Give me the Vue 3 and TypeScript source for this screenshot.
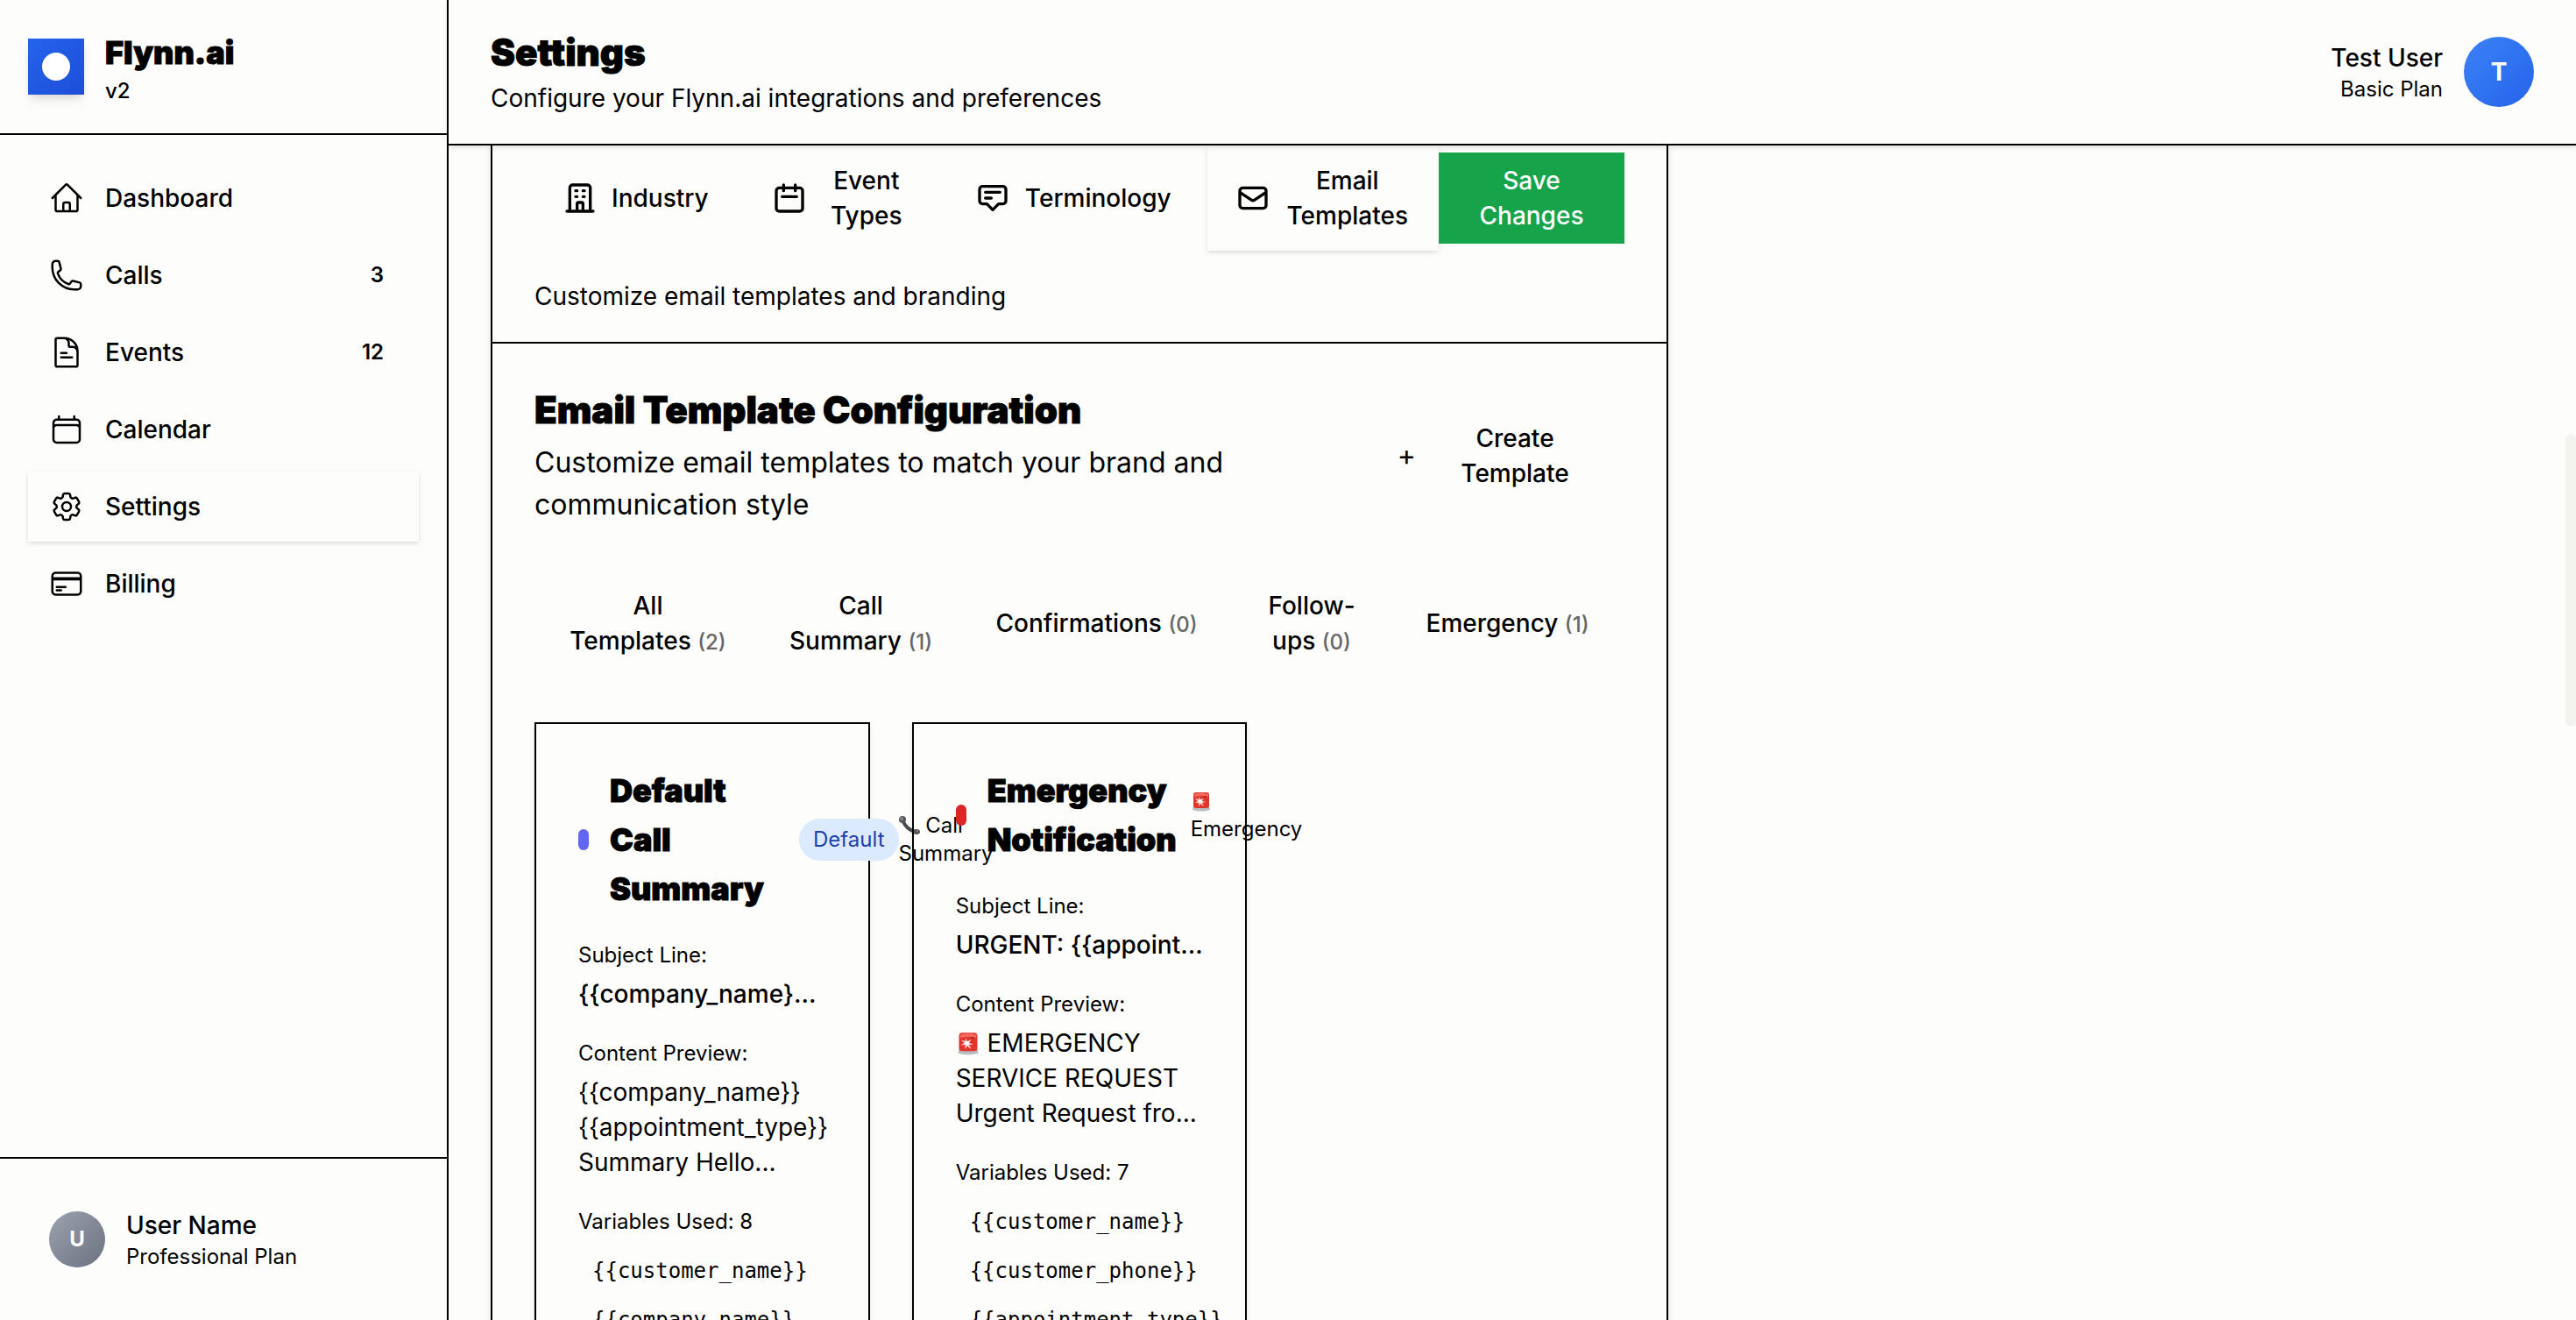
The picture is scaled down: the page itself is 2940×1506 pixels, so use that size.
<script setup lang="ts">
interface NavItem { label: string; paths: string[]; badge?: string; active?: boolean }
interface Tab { label: string; path: string; active?: boolean }
interface Filter { label: string; count: number }
interface Template {
  title: string
  color: string
  isDefault: boolean
  icon: 'phone' | 'siren'
  type: string
  subject: string
  preview: string[]
  alert: boolean
  total: number
  variables: string[]
}

const navItems: NavItem[] = [
  { label: 'Dashboard', paths: ['m2.25 12 8.954-8.955c.44-.439 1.152-.439 1.591 0L21.75 12M4.5 9.75v10.125c0 .621.504 1.125 1.125 1.125H9.75v-4.875c0-.621.504-1.125 1.125-1.125h2.25c.621 0 1.125.504 1.125 1.125V21h4.125c.621 0 1.125-.504 1.125-1.125V9.75M8.25 21h8.25'] },
  { label: 'Calls', badge: '3', paths: ['M2.25 6.75c0 8.284 6.716 15 15 15h2.25a2.25 2.25 0 0 0 2.25-2.25v-1.372c0-.516-.351-.966-.852-1.091l-4.423-1.106c-.44-.11-.902.055-1.173.417l-.97 1.293c-.282.376-.769.542-1.21.38a12.035 12.035 0 0 1-7.143-7.143c-.162-.441.004-.928.38-1.21l1.293-.97c.363-.271.527-.734.417-1.173L6.963 3.102a1.125 1.125 0 0 0-1.091-.852H4.5A2.25 2.25 0 0 0 2.25 4.5v2.25Z'] },
  { label: 'Events', badge: '12', paths: ['M19.5 14.25v-2.625a3.375 3.375 0 0 0-3.375-3.375h-1.5A1.125 1.125 0 0 1 13.5 7.125v-1.5a3.375 3.375 0 0 0-3.375-3.375H8.25M8.25 12.5H12m-3.75 3h7.5M10.5 2.25H5.625c-.621 0-1.125.504-1.125 1.125v17.25c0 .621.504 1.125 1.125 1.125h12.75c.621 0 1.125-.504 1.125-1.125V11.25a9 9 0 0 0-9-9Z'] },
  { label: 'Calendar', paths: ['M6.75 3v2.25M17.25 3v2.25M3 18.75V7.5a2.25 2.25 0 0 1 2.25-2.25h13.5A2.25 2.25 0 0 1 21 7.5v11.25m-18 0A2.25 2.25 0 0 0 5.25 21h13.5A2.25 2.25 0 0 0 21 18.75m-18 0v-7.5A2.25 2.25 0 0 1 5.25 9h13.5A2.25 2.25 0 0 1 21 11.25v7.5'] },
  { label: 'Settings', active: true, paths: [
    'M9.594 3.94c.09-.542.56-.94 1.11-.94h2.593c.55 0 1.02.398 1.11.94l.213 1.281c.063.374.313.686.645.87.074.04.147.083.22.127.325.196.72.257 1.075.124l1.217-.456a1.125 1.125 0 0 1 1.37.49l1.296 2.247a1.125 1.125 0 0 1-.26 1.431l-1.003.827c-.293.241-.438.613-.43.992a7.723 7.723 0 0 1 0 .255c-.008.378.137.75.43.991l1.004.827c.424.35.534.955.26 1.43l-1.298 2.247a1.125 1.125 0 0 1-1.369.491l-1.217-.456c-.355-.133-.75-.072-1.076.124a6.47 6.47 0 0 1-.22.128c-.331.183-.581.495-.644.869l-.213 1.281c-.09.543-.56.94-1.11.94h-2.594c-.55 0-1.019-.398-1.11-.94l-.213-1.281c-.062-.374-.312-.686-.644-.87a6.52 6.52 0 0 1-.22-.127c-.325-.196-.72-.257-1.076-.124l-1.217.456a1.125 1.125 0 0 1-1.369-.49l-1.297-2.247a1.125 1.125 0 0 1 .26-1.431l1.004-.827c.292-.24.437-.613.43-.991a6.932 6.932 0 0 1 0-.255c.007-.38-.138-.751-.43-.992l-1.004-.827a1.125 1.125 0 0 1-.26-1.43l1.297-2.247a1.125 1.125 0 0 1 1.37-.491l1.216.456c.356.133.751.072 1.076-.124.072-.044.146-.086.22-.128.332-.183.582-.495.644-.869l.214-1.28Z',
    'M15 12a3 3 0 1 1-6 0 3 3 0 0 1 6 0Z',
  ] },
  { label: 'Billing', paths: ['M2.25 8.25h19.5M2.25 9h19.5m-16.5 5.25h6m-6 2.25h3m-3.75 3h15a2.25 2.25 0 0 0 2.25-2.25V6.75A2.25 2.25 0 0 0 19.5 4.5h-15a2.25 2.25 0 0 0-2.25 2.25v10.5A2.25 2.25 0 0 0 4.5 19.5Z'] },
]

const tabs: Tab[] = [
  { label: 'Industry', path: 'M19 21V5a2 2 0 00-2-2H7a2 2 0 00-2 2v16m14 0h2m-2 0h-5m-9 0H3m2 0h5M9 7h1m-1 4h1m4-4h1m-1 4h1m-5 10v-5a1 1 0 011-1h2a1 1 0 011 1v5m-4 0h4' },
  { label: 'Event Types', path: 'M8 7V3m8 4V3m-9 8h10M5 21h14a2 2 0 002-2V7a2 2 0 00-2-2H5a2 2 0 00-2 2v12a2 2 0 002 2z' },
  { label: 'Terminology', path: 'M7 8h10M7 12h4m1 8l-4-4H5a2 2 0 01-2-2V6a2 2 0 012-2h14a2 2 0 012 2v8a2 2 0 01-2 2h-3l-4 4z' },
  { label: 'Email Templates', active: true, path: 'M3 8l7.89 5.26a2 2 0 002.22 0L21 8M5 19h14a2 2 0 002-2V7a2 2 0 00-2-2H5a2 2 0 00-2 2v10a2 2 0 002 2z' },
]

const filters: Filter[] = [
  { label: 'All Templates', count: 2 },
  { label: 'Call Summary', count: 1 },
  { label: 'Confirmations', count: 0 },
  { label: 'Follow-ups', count: 0 },
  { label: 'Emergency', count: 1 },
]

const templates: Template[] = [
  {
    title: 'Default Call Summary', color: '#6366f1', isDefault: true, icon: 'phone', type: 'Call Summary',
    subject: '{{company_name}...',
    preview: ['{{company_name}}', '{{appointment_type}}', 'Summary Hello...'],
    alert: false, total: 8,
    variables: ['{{customer_name}}', '{{company_name}}'],
  },
  {
    title: 'Emergency Notification', color: '#dc2626', isDefault: false, icon: 'siren', type: 'Emergency',
    subject: 'URGENT: {{appoint...',
    preview: ['EMERGENCY', 'SERVICE REQUEST', 'Urgent Request fro...'],
    alert: true, total: 7,
    variables: ['{{customer_name}}', '{{customer_phone}}', '{{appointment_type}}'],
  },
]
</script>

<template>
  <div class="app">
    <aside class="sidebar">
      <div class="brand">
        <div class="logo"><span></span></div>
        <div>
          <div class="brand-name">Flynn.ai</div>
          <div class="brand-version">v2</div>
        </div>
      </div>
      <nav class="nav">
        <a v-for="item in navItems" :key="item.label" href="#" class="nav-item" :class="{ active: item.active }">
          <svg class="icon thin" viewBox="0 0 24 24"><path v-for="d in item.paths" :key="d" :d="d" /></svg>
          <span class="nav-label">{{ item.label }}</span>
          <span v-if="item.badge" class="nav-badge">{{ item.badge }}</span>
        </a>
      </nav>
      <div class="account">
        <div class="avatar small">U</div>
        <div>
          <div class="person">User Name</div>
          <div class="plan">Professional Plan</div>
        </div>
      </div>
    </aside>

    <div class="main">
      <header class="topbar">
        <div>
          <h1>Settings</h1>
          <p>Configure your Flynn.ai integrations and preferences</p>
        </div>
        <div class="profile">
          <div>
            <div class="person">Test User</div>
            <div class="plan">Basic Plan</div>
          </div>
          <div class="avatar large">T</div>
        </div>
      </header>

      <main class="content">
        <div class="panel">
          <section class="panel-head">
            <div class="toolbar">
              <div class="tabs">
                <button v-for="tab in tabs" :key="tab.label" type="button" class="tab" :class="{ active: tab.active }">
                  <svg class="icon" viewBox="0 0 24 24"><path :d="tab.path" /></svg>
                  <span>{{ tab.label }}</span>
                </button>
              </div>
              <button type="button" class="save">Save Changes</button>
            </div>
            <p class="hint">Customize email templates and branding</p>
          </section>

          <section class="panel-body">
            <div class="intro">
              <div>
                <h2>Email Template Configuration</h2>
                <p>Customize email templates to match your brand and communication style</p>
              </div>
              <button type="button" class="create"><span class="plus">+</span><span class="create-label">Create Template</span></button>
            </div>

            <div class="filters">
              <button v-for="f in filters" :key="f.label" type="button" class="filter">
                {{ f.label }}&nbsp;<small>({{ f.count }})</small>
              </button>
            </div>

            <div class="cards">
              <article v-for="t in templates" :key="t.title" class="card">
                <div class="card-head">
                  <span class="dot" :style="{ background: t.color }"></span>
                  <h3>{{ t.title }}</h3>
                  <span v-if="t.isDefault" class="pill">Default</span>
                  <span class="type" :class="{ spaced: !t.isDefault }">
                    <svg v-if="t.icon === 'phone'" class="emoji" viewBox="0 0 24 24">
                      <path d="M4 5C6 12 12 18 20 19" fill="none" stroke="#4b4b4e" stroke-width="4" />
                      <circle cx="4" cy="5" r="4" fill="#55565a" /><circle cx="3" cy="4" r="2" fill="#85868a" />
                      <ellipse cx="20" cy="19" rx="4" ry="3" fill="#55565a" /><circle cx="21" cy="18" r="1" fill="#85868a" />
                    </svg>
                    <svg v-else class="emoji" viewBox="0 0 24 24"><use href="#siren" /></svg>
                    {{ t.type }}
                  </span>
                </div>

                <div class="field">
                  <div class="caption">Subject Line:</div>
                  <div class="subject">{{ t.subject }}</div>
                </div>
                <div class="field">
                  <div class="caption">Content Preview:</div>
                  <div v-for="(line, i) in t.preview" :key="line" class="line">
                    <svg v-if="t.alert && i === 0" class="emoji big" viewBox="0 0 24 24"><use href="#siren" /></svg>
                    {{ line }}
                  </div>
                </div>
                <div class="field">
                  <div class="caption">Variables Used: {{ t.total }}</div>
                  <div class="chips">
                    <code v-for="v in t.variables" :key="v">{{ v }}</code>
                  </div>
                </div>
              </article>
            </div>
          </section>
        </div>
      </main>
      <div class="scroll-thumb"></div>
    </div>

    <svg class="defs" aria-hidden="true">
      <symbol id="siren" viewBox="0 0 24 24">
        <path d="M3 18h18l1 4q-10 3-20 0z" fill="#b9bcc0" />
        <rect x="3" y="2" width="18" height="18" rx="3" fill="#e3342b" />
        <path d="M4 4q8-3 16 0v3q-8-2-16 0z" fill="#f26a5e" />
        <path d="M10 7l1 4 4-3-2 4 4 1-4 1 2 4-4-3-2 3v-4l-4 0 3-2-3-3 4 1z" fill="#ffd3cc" />
        <circle cx="11" cy="12" r="2" fill="#fff" />
        <path d="M14 8q2-2 4-1" fill="none" stroke="#8e1712" stroke-width="1" />
      </symbol>
    </svg>
  </div>
</template>

<style>
body { margin: 0; background: #fdfdfc; }
</style>

<style scoped>
* { box-sizing: border-box; }
.app {
  display: flex;
  height: 100vh;
  overflow: hidden;
  background: #fdfdfc;
  color: #000;
  font: 400 28px/40px Inter, sans-serif;
}
h1, h2, h3, p { margin: 0; }
button { border: 0; margin: 0; background: none; color: inherit; font: inherit; font-weight: 500; cursor: pointer; }
.defs { position: absolute; width: 0; height: 0; }
.icon { flex: none; width: 40px; height: 40px; fill: none; stroke: currentColor; stroke-width: 2; stroke-linecap: round; stroke-linejoin: round; }
.icon.thin { stroke-width: 1.5; }

.sidebar { flex: none; width: 512px; display: flex; flex-direction: column; border-right: 2px solid #000; }
.brand { display: flex; align-items: center; gap: 24px; padding: 32px; border-bottom: 2px solid #000; }
.logo { width: 64px; height: 64px; display: grid; place-items: center; background: linear-gradient(135deg, #2563eb, #1d4ed8); box-shadow: 0 8px 12px -2px rgb(0 0 0 / 10%), 0 4px 8px -4px rgb(0 0 0 / 10%); }
.logo span { width: 32px; height: 32px; border-radius: 50%; background: #fff; }
.brand-name, h1, h2, h3 { font-weight: 900; line-height: 56px; -webkit-text-stroke: 1px currentColor; }
.brand-name, h3 { font-size: 36px; }
.brand-version { font-size: 24px; font-weight: 500; line-height: 32px; }
.nav { flex: 1; display: flex; flex-direction: column; gap: 8px; padding: 32px; }
.nav-item { display: flex; align-items: center; gap: 24px; height: 80px; padding: 0 24px; color: inherit; text-decoration: none; font-weight: 500; }
.nav-item.active, .tab.active { box-shadow: 0 2px 6px rgb(0 0 0 / 10%), 0 2px 4px -2px rgb(0 0 0 / 10%); }
.nav-label { flex: 1; }
.nav-badge { padding: 0 16px; font-size: 24px; font-weight: 600; line-height: 32px; }
.account { display: flex; align-items: center; gap: 24px; padding: 56px; border-top: 2px solid #000; }
.avatar { display: grid; place-items: center; border-radius: 50%; color: #fff; font-weight: 700; }
.small { width: 64px; height: 64px; font-size: 24px; background: linear-gradient(135deg, #9ca3af, #6b7280); }
.large { width: 80px; height: 80px; background: linear-gradient(135deg, #3b82f6, #2563eb); }
.person { font-weight: 500; }
.plan { font-size: 24px; line-height: 32px; }

.main { position: relative; flex: 1; min-width: 0; display: flex; flex-direction: column; }
.topbar { position: relative; z-index: 1; flex: none; display: flex; align-items: center; justify-content: space-between; padding: 32px 48px; background: #fdfdfc; border-bottom: 2px solid #000; box-shadow: 0 2px 6px rgb(0 0 0 / 12%); }
h1, h2 { font-size: 42px; }
.topbar p { margin-top: 4px; }
.profile { display: flex; align-items: center; gap: 24px; text-align: right; }

.content { flex: 1; min-height: 0; overflow: hidden; padding: 0 48px; }
.panel { max-width: 1344px; border: 2px solid #000; border-top: 0; box-shadow: 0 2px 8px rgb(0 0 0 / 10%); }
.panel-head { padding: 0 48px 32px; border-bottom: 2px solid #000; }
.toolbar { display: flex; align-items: center; }
.tabs { flex: 1; display: grid; grid-template-columns: 230fr 224fr 288fr 264fr; gap: 8px; }
.tab { display: flex; align-items: center; gap: 16px; height: 120px; padding: 0 32px; }
.tab span { flex: 1; text-align: center; }
.save { width: 212px; height: 104px; padding: 0 40px; background: #16a34a; color: #fff; }
.hint { margin-top: 32px; }
.panel-body { padding: 48px; }
.intro { display: flex; align-items: center; justify-content: space-between; }
.intro > div { max-width: 880px; }
.intro p { margin-top: 8px; font-size: 32px; line-height: 48px; }
.create { display: flex; align-items: center; gap: 36px; padding: 0 48px; }
.plus { font-size: 32px; font-weight: 400; }
.create-label { width: 154px; }
.filters { display: grid; grid-template-columns: 259fr 211fr 311fr 164fr 267fr; gap: 8px; margin: 48px 0; }
.filter { height: 128px; padding: 0 24px; }
.filter small { font-size: 24px; color: #666; }
.cards { display: grid; grid-template-columns: repeat(3, minmax(0, 1fr)); gap: 48px; }
.card { min-width: 0; padding: 48px; border: 2px solid #000; box-shadow: 0 2px 6px rgb(0 0 0 / 10%); }
.card-head { display: flex; align-items: center; }
.card-head > * { flex: none; }
.dot { width: 12px; height: 24px; border-radius: 6px; margin-right: 24px; }
h3 { width: 216px; padding-right: 24px; }
.pill { padding: 8px 16px; border-radius: 24px; background: #dbeafe; color: #1e40af; font-size: 24px; line-height: 32px; }
.type { width: min-content; font-size: 24px; line-height: 32px; }
.type.spaced { margin-left: 16px; }
.emoji { width: 24px; height: 24px; vertical-align: -4px; }
.emoji.big { width: 28px; height: 28px; }
.field { margin-top: 32px; white-space: nowrap; }
.caption { margin-bottom: 8px; font-size: 24px; line-height: 32px; }
.subject { font-weight: 500; }
.chips { display: flex; flex-direction: column; gap: 8px; margin-top: 16px; }
code { padding: 8px 16px; font: 24px/32px "DejaVu Sans Mono", monospace; }
.scroll-thumb { position: absolute; right: 0; top: 495px; width: 12px; height: 334px; border-radius: 6px; background: #f3f4ee; }
</style>
